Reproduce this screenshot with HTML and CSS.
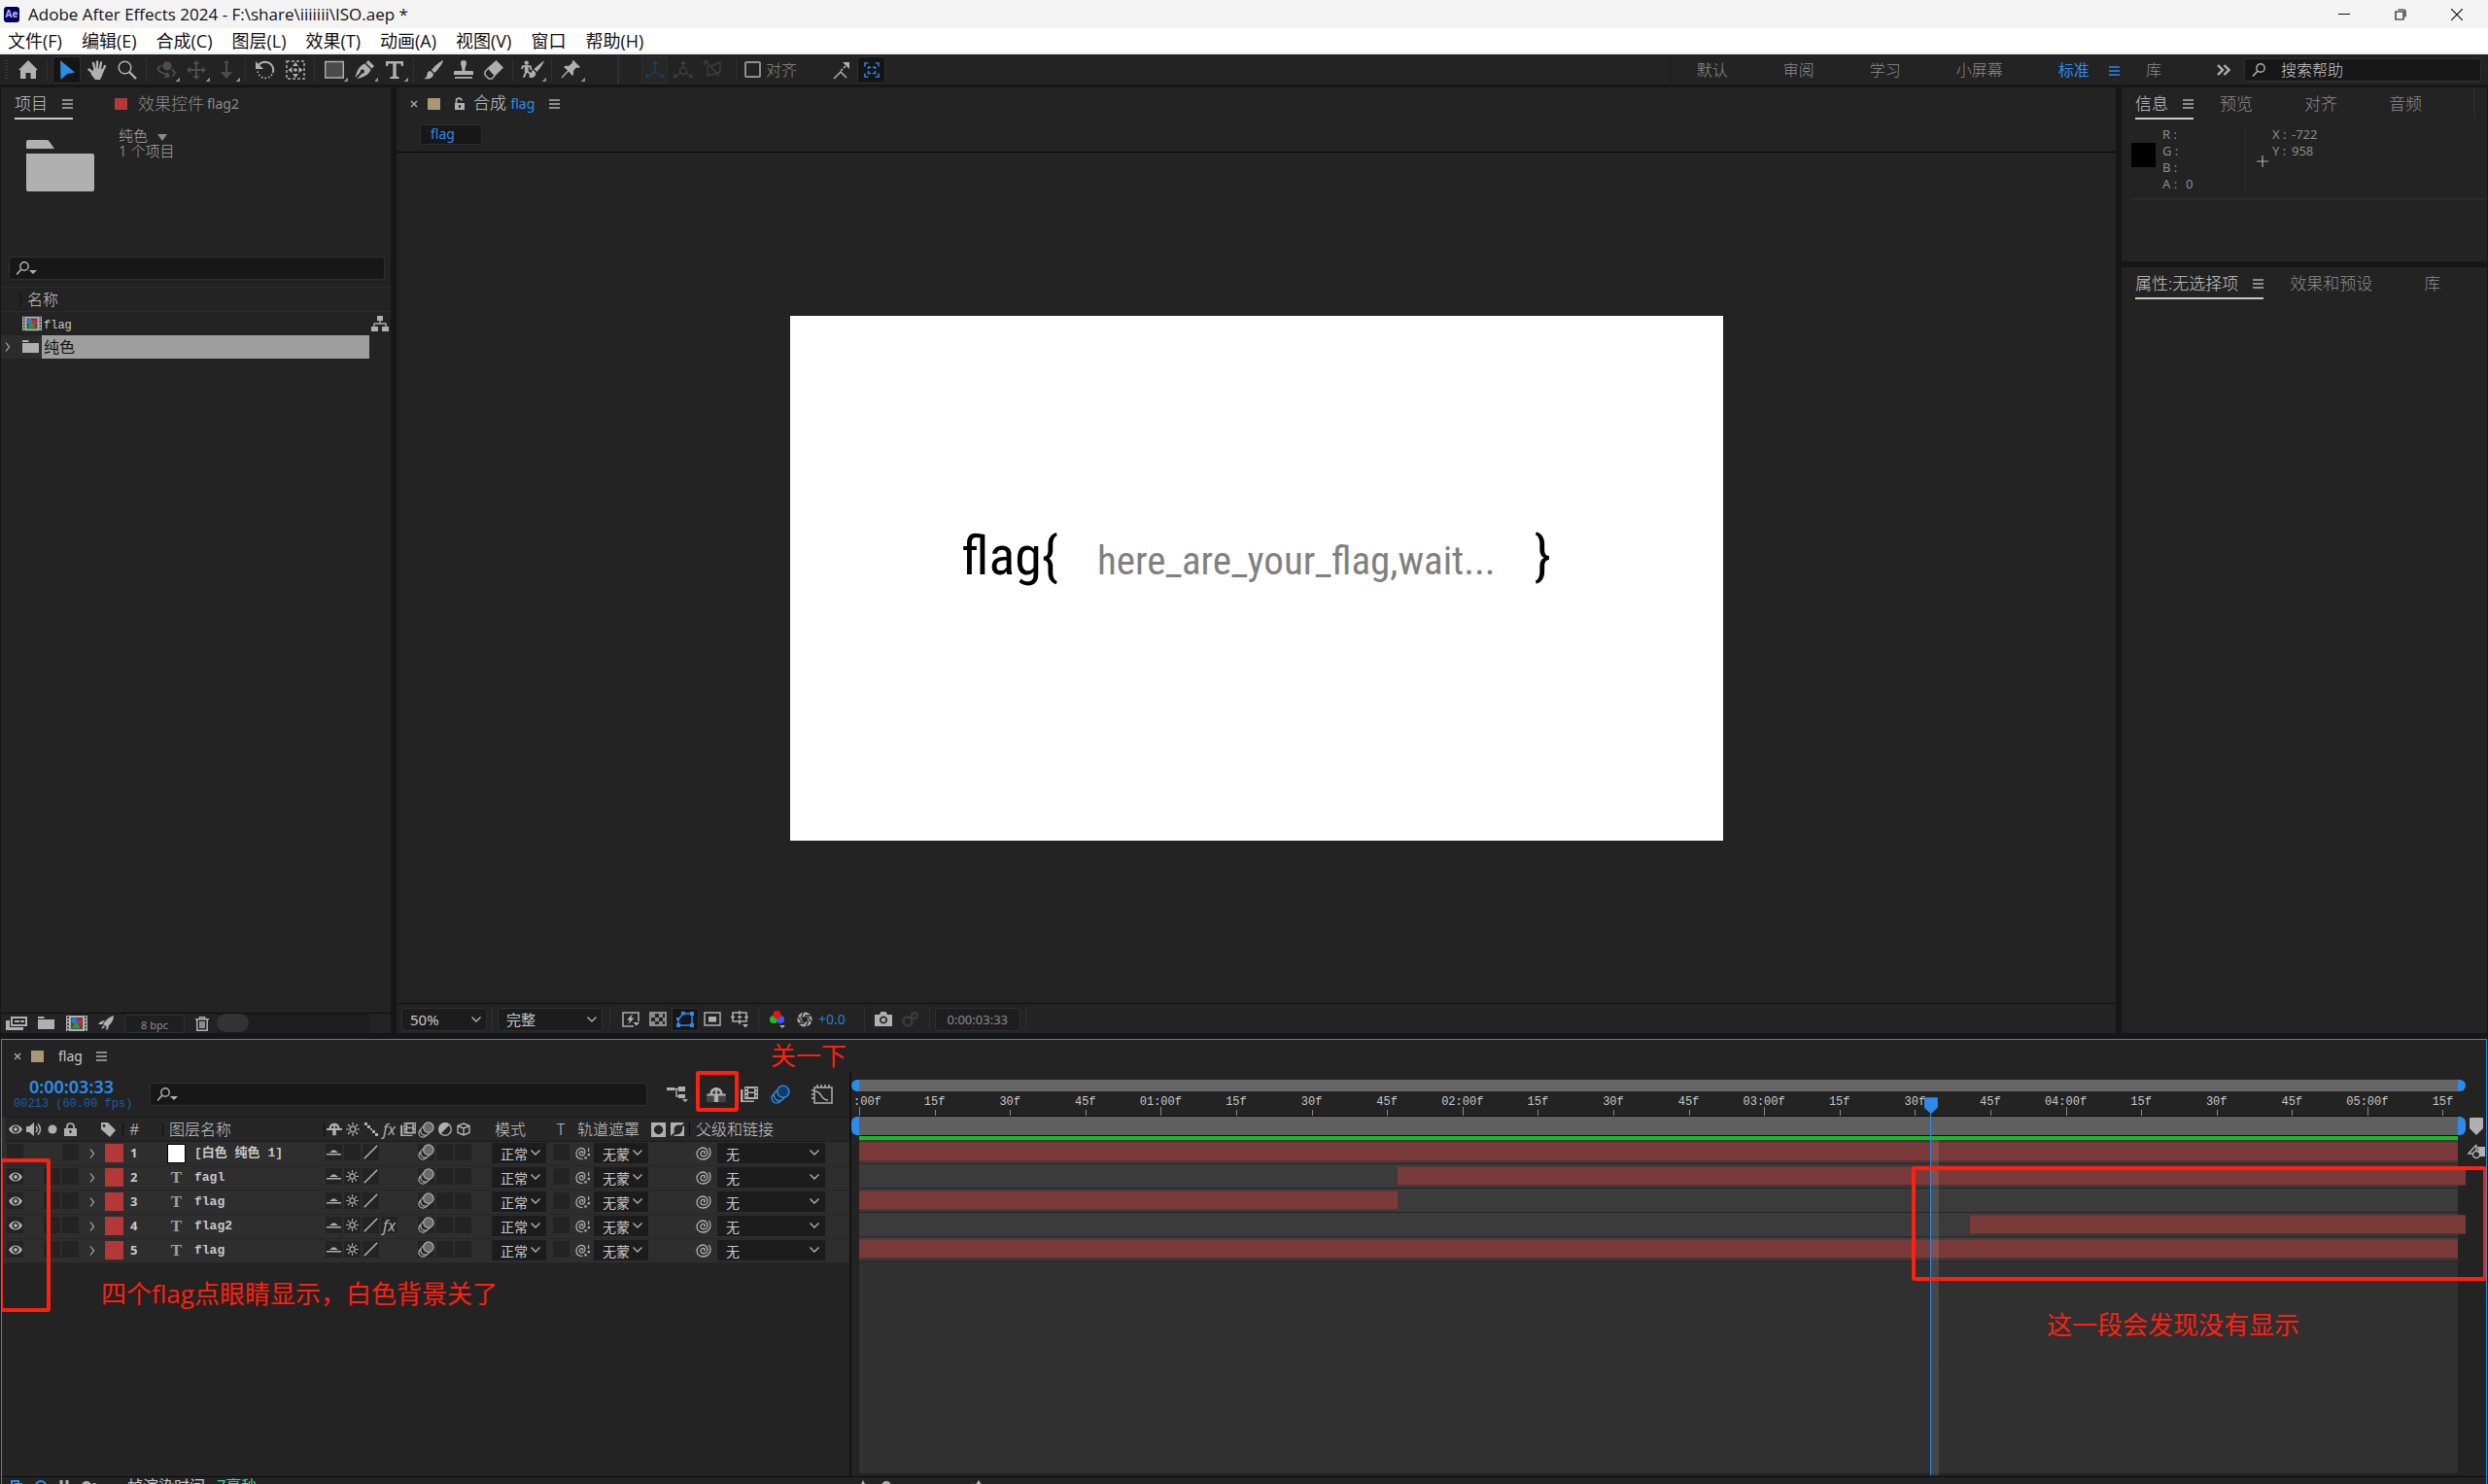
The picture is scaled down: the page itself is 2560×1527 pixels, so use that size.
FILE: index.html
```html
<!DOCTYPE html>
<html lang="zh-CN">
<head>
    <meta charset="UTF-8">
    <meta name="viewport" content="width=device-width, initial-scale=1.0">
    <title>Adobe After Effects 2024</title>
    <link rel="stylesheet" href="styles.css">
</head>
<body>
    <!-- Icon sprite -->
    <svg class="sprite" aria-hidden="true">
        <symbol id="i-home" viewBox="0 0 20 20"><path fill="currentColor" d="M10 0 20 10h-2v9h-5.500v-6h-5v6H2v-9H0z"/></symbol>
        <symbol id="i-select" viewBox="0 0 20 20"><path fill="currentColor" d="M3 0 18 12.500 10 14 3.500 20z"/></symbol>
        <symbol id="i-hand" viewBox="0 0 20 20"><path fill="none" stroke="currentColor" stroke-width="2.400" stroke-linecap="round" d="M6 3l2 8M10 1.500V11M14 2.500 12.500 11M18 6l-3 6M1.500 9.500 6 13"/><path fill="currentColor" d="M6 9h9l2 1-2 6-2 4H8l-4-5-1-4 3 1z"/></symbol>
        <symbol id="i-zoom" viewBox="0 0 20 20"><circle cx="7.500" cy="7.500" r="6.300" fill="none" stroke="currentColor" stroke-width="1.500"/><path stroke="currentColor" stroke-width="2.400" d="M12 12l7 7"/></symbol>
        <symbol id="i-orbit" viewBox="0 0 22 20"><circle cx="12" cy="5.500" r="5" fill="currentColor"/><path fill="none" stroke="currentColor" stroke-width="2" d="M6 5C2 6 0 9 4 12c3 2 7 2 9 5M17 9c4 2 5 6 1 8M9 18l5-1-2-4"/></symbol>
        <symbol id="i-move" viewBox="0 0 20 20"><path fill="currentColor" d="M10 0l3.500 4H11v5h5V6.500l4 3.500-4 3.500V11h-5v5h2.500L10 20l-3.500-4H9v-5H4v2.500L0 10l4-3.500V9h5V4H6.500z"/></symbol>
        <symbol id="i-dolly" viewBox="0 0 20 20"><path fill="currentColor" d="M10 0l3 3h-2v9h5l-6 7-6-7h5V3H7z"/></symbol>
        <symbol id="i-rotate" viewBox="0 0 20 20"><path fill="none" stroke="currentColor" stroke-width="2" d="M3 5c4-5 13-4 15 3 .4 2 .3 4-.5 5"/><path fill="none" stroke="currentColor" stroke-width="1.600" stroke-dasharray="1.600 2" d="M17 14.500C13 20.500 4 19.500 2 11.500"/><path fill="currentColor" d="M0 1v8h8z"/></symbol>
        <symbol id="i-anchor" viewBox="0 0 20 20"><path fill="none" stroke="currentColor" stroke-width="1.500" stroke-dasharray="3 2" d="M1 1h18v18H1z"/><path fill="currentColor" d="M10 2l3 4H7zM10 18l-3-4h6zM2.500 10l4-3v6zM17.500 10l-4-3v6z"/><circle cx="10" cy="10" r="1.800" fill="currentColor"/></symbol>
        <symbol id="i-rect" viewBox="0 0 20 20"><path fill="#4a4a4a" stroke="currentColor" stroke-width="1.400" d="M.7 1.500h18.600v16.500H.7z"/></symbol>
        <symbol id="i-pen" viewBox="0 0 20 20"><path fill="currentColor" d="M14 0l6 6-2.500 2.500-6-6zM10.500 3.500l6 6C15 15 9 17 2 19.500l5.500-6a2 2 0 1 0-1.500-1.500L.5 18C2 11 5 5 10.500 3.500z"/></symbol>
        <symbol id="i-type" viewBox="0 0 20 20"><path fill="currentColor" d="M1 1h18v5h-2l-.6-2.500H11.700V16.500l2.800.7V19h-9v-1.800l2.800-.7V3.500H3.600L3 6H1z"/></symbol>
        <symbol id="i-brush" viewBox="0 0 20 20"><path fill="currentColor" d="M20 0c0 2-5 10-9 13l-3-3C11 6 17 1 20 0zM7 11l3 3c0 4-4 6-10 5 3-1 3-2 3.500-5 .3-2 1.700-3 3.500-3z"/></symbol>
        <symbol id="i-stamp" viewBox="0 0 20 20"><path fill="currentColor" d="M10 0a3 3 0 0 1 3 3c0 2-1.500 3-1.500 8H19c1 0 1 1 1 1v3H0v-3s0-1 1-1h7.500c0-5-1.500-6-1.500-8a3 3 0 0 1 3-3zM1 17h18v1.700H1z"/></symbol>
        <symbol id="i-eraser" viewBox="0 0 20 20"><path fill="currentColor" d="M12.500 0 20 7.500 11 16.500 3.500 8z"/><path fill="none" stroke="currentColor" stroke-width="1.500" d="M4 8.500 1 12v3l4 4h3l3-3"/></symbol>
        <symbol id="i-roto" viewBox="0 0 25 20"><circle cx="6" cy="2.300" r="2.300" fill="currentColor"/><path fill="none" stroke="currentColor" stroke-width="2" d="M6 5v6l-3 7M6 11l4 3v4M1 9l1-3h8l1 4"/><path fill="currentColor" d="M4 5h4v7H4zM25 0c-1 3-5 9-8 12l-3-3c3-3 9-8 11-9zM13 10l3 3c0 4-3 6-7 5 2-2 1-6 4-8z"/></symbol>
        <symbol id="i-pin" viewBox="0 0 20 20"><path fill="currentColor" d="M12 0l7 7-2 1-2-.5-3 3.500c.5 2 0 4-1 5L7 11.500.5 18.500l-1-1L6 10.500 2 7c1-1 3-1.500 5-1l4-3.500L10.500 1z"/></symbol>
        <symbol id="i-axis" viewBox="0 0 20 20"><path fill="none" stroke="currentColor" stroke-width="1.400" d="M10 3v9M10 12l-8 5M10 12l8 5"/><path fill="currentColor" d="M10 0l3 4H7zM0 18l1-5 3 5zM20 18l-1-5-3 5z"/></symbol>
        <symbol id="i-world" viewBox="0 0 20 20"><path fill="none" stroke="currentColor" stroke-width="1.400" d="M10 3v5M7 13l-5 4M13 13l5 4"/><circle cx="10" cy="11" r="3.500" fill="none" stroke="currentColor" stroke-width="1.400"/><path fill="currentColor" d="M10 0l3 4H7zM0 18l1-5 3 5zM20 18l-1-5-3 5z"/></symbol>
        <symbol id="i-view" viewBox="0 0 20 20"><path fill="none" stroke="currentColor" stroke-width="1.400" d="M2 1l14 15M4 6v10l13-4V2L8 6M1 5V1h4"/></symbol>
        <symbol id="i-snap" viewBox="0 0 20 20"><path fill="none" stroke="currentColor" stroke-width="1.500" d="M2 19l7-7 6 6M9 11l2-2M12 8l2-2"/><path fill="currentColor" d="M11 2h7v7z"/></symbol>
        <symbol id="i-snap2" viewBox="0 0 18 18"><path fill="none" stroke="currentColor" stroke-width="1.600" d="M1 5V1h4M13 1h4v4M17 13v4h-4M5 17H1v-4M5 8V6h3M10 6h3v2M13 10v3h-3M8 13H5v-3"/></symbol>
        <symbol id="i-menu" viewBox="0 0 11 10"><path stroke="currentColor" stroke-width="1.400" d="M0 1h11M0 5h11M0 9h11"/></symbol>
        <symbol id="i-more" viewBox="0 0 14 12"><path fill="none" stroke="currentColor" stroke-width="2.400" d="M1 1l5 5-5 5M7.500 1l5 5-5 5"/></symbol>
        <symbol id="i-close" viewBox="0 0 8 8"><path stroke="currentColor" stroke-width="1.300" d="M1 1l6 6M7 1 1 7"/></symbol>
        <symbol id="i-search" viewBox="0 0 20 14"><circle cx="8" cy="5" r="4.200" fill="none" stroke="currentColor" stroke-width="1.400"/><path stroke="currentColor" stroke-width="1.600" d="M5 8l-5 5.500"/></symbol>
        <symbol id="i-searchdrop" viewBox="0 0 22 14"><circle cx="8" cy="5" r="4.200" fill="none" stroke="currentColor" stroke-width="1.400"/><path stroke="currentColor" stroke-width="1.600" d="M5 8l-5 5.500"/><path fill="currentColor" d="M13 9h8l-4 4z"/></symbol>
        <symbol id="i-lockopen" viewBox="0 0 12 14"><path fill="none" stroke="currentColor" stroke-width="1.600" d="M2.500 6V3.500C2.500.3 8 .3 8 3.500"/><path fill="currentColor" fill-rule="evenodd" d="M1 6h10v7H1zM5 8v3h2V8z"/></symbol>
        <symbol id="i-folder" viewBox="0 0 70 53"><path fill="currentColor" d="M0 9V2q0-2 2-2h19q2 0 3 2l5 7zM0 14h68q2 0 2 2v35q0 2-2 2H2q-2 0-2-2z"/></symbol>
        <symbol id="i-folders" viewBox="0 0 18 14"><path fill="currentColor" d="M0 2V0h6l1 2zM0 3h17v10H0z"/></symbol>
        <symbol id="i-comp" viewBox="0 0 22 16"><path fill="#b0b0b0" d="M0 0h22v16H0z"/><path stroke="#232323" stroke-width="1.500" stroke-dasharray="2 1.500" d="M2 1v15M20 1v15"/><path fill="#4a4a4a" d="M5 2h12v12H5z"/><circle cx="8.500" cy="5.500" r="3" fill="#1f7be0"/><path fill="#d8252b" d="M11 4h5v6h-5z"/><path fill="#1ea03c" d="M10 6l5 7H6z"/></symbol>
        <symbol id="i-tree" viewBox="0 0 18 16"><path fill="currentColor" d="M6 0h6v5H6zM0 11h7v5H0zM11 11h7v5h-7z"/><path fill="none" stroke="currentColor" stroke-width="1.300" d="M9 5v3M3 11V8h12v3"/></symbol>
        <symbol id="i-footage" viewBox="0 0 22 14"><path fill="none" stroke="currentColor" stroke-width="2" d="M6 1h15v8H6z"/><path fill="currentColor" d="M9 4h5v2H9zM15 4h4v2h-4zM0 4h4v7h14v3H0z"/></symbol>
        <symbol id="i-rocket" viewBox="0 0 16 16"><path fill="currentColor" d="M16 0c0 5-3 9-7 12l-4-3C8 4 12 1 16 0zM0 9c2-3 4-4 7-4L4 9zM8 15c2-1 3-2 3-5l-3 3zM5 10l2 2-4 2z"/></symbol>
        <symbol id="i-trash" viewBox="0 0 14 15"><path fill="none" stroke="currentColor" stroke-width="1.500" d="M0 2.800h14M4.500 2.500V.8h5v1.700M1.800 3v11.200h10.400V3M5 5v7M7 5v7M9 5v7"/></symbol>
        <symbol id="i-chev" viewBox="0 0 10 6"><path fill="none" stroke="currentColor" stroke-width="1.400" d="M.5.5 5 5 9.500.5"/></symbol>
        <symbol id="i-chevr" viewBox="0 0 6 10"><path fill="none" stroke="currentColor" stroke-width="1.200" d="M1 .5 4.500 5 1 9.500"/></symbol>
        <symbol id="i-fast" viewBox="0 0 18 16"><path fill="none" stroke="currentColor" stroke-width="1.500" d="M17 10V1H1v14h11"/><path fill="currentColor" d="M11 2 5 8.500h3L6.500 13l6-6.500H9.500zM11.500 11h6.500l-3.200 3.500z"/></symbol>
        <symbol id="i-grid" viewBox="0 0 18 15"><path fill="none" stroke="currentColor" stroke-width="1.500" d="M1 1h16v13H1z"/><path fill="#8a8a8a" d="M2 2h4v4H2zM10 2h4v4h-4zM6 6h4v4H6zM14 6h2v4h-2zM2 10h4v3H2zM10 10h4v3h-4z"/></symbol>
        <symbol id="i-mask" viewBox="0 0 18 16"><path fill="none" stroke="currentColor" stroke-width="1.500" d="M2 14V8l5-6h9v12z"/><path fill="currentColor" d="M0 12h4v4H0zM0 6h3v3H0zM5 0h4v3H5zM14 0h4v4h-4zM14 12h4v4h-4z"/></symbol>
        <symbol id="i-roi" viewBox="0 0 18 15"><path fill="none" stroke="currentColor" stroke-width="1.500" d="M1 1h16v13H1z"/><path fill="currentColor" d="M5 5h8v5.500H5z"/></symbol>
        <symbol id="i-guides" viewBox="0 0 18 18"><path fill="none" stroke="currentColor" stroke-width="1.500" d="M2 2h14v9H2zM9 0v4M9 9v5M0 6.500h4M14 6.500h4M7 6.500h4M9 5v3"/><path fill="currentColor" d="M12 14h6l-3 3.500z"/></symbol>
        <symbol id="i-rgb" viewBox="0 0 16 18"><circle cx="4" cy="9" r="4" fill="#1dc01d"/><circle cx="11" cy="9" r="4" fill="#3a5bff"/><circle cx="7.500" cy="4" r="4" fill="#f01010"/><path fill="#b0b0b0" d="M10 15h6l-3 3z"/></symbol>
        <symbol id="i-shutter" viewBox="0 0 16 16"><circle cx="8" cy="8" r="5.300" fill="none" stroke="currentColor" stroke-width="4.600"/><path stroke="#232323" stroke-width="1.300" d="M7 0 4 7M15 4 8 4M15 11l-4-6M9 16l3-7M1 12h7M1 5l4 6"/></symbol>
        <symbol id="i-camera" viewBox="0 0 18 15"><path fill="currentColor" fill-rule="evenodd" d="M0 3h5l1.500-3h5L13 3h5v12H0zM9 4.500a4 4 0 1 0 .1 0z"/><circle cx="9" cy="8.500" r="2.300" fill="currentColor"/></symbol>
        <symbol id="i-ghost" viewBox="0 0 18 16"><circle cx="6" cy="10" r="4.500" fill="none" stroke="currentColor" stroke-width="2.500"/><circle cx="13" cy="4" r="3" fill="none" stroke="currentColor" stroke-width="2"/></symbol>
        <symbol id="i-flow" viewBox="0 0 22 16"><path fill="currentColor" d="M0 1h8v3H0zM12 0h7v5h-7zM12 8h7v4h-7zM16 13h6l-3 3z"/><path fill="none" stroke="currentColor" stroke-width="1.400" d="M7 2.500h6M10 2.500V10h3"/></symbol>
        <symbol id="i-shy" viewBox="0 0 18 14"><path fill="currentColor" fill-rule="evenodd" d="M3 6c0-8 12-8 12 0h3v2h-7v6H7V8H0V6zM5.500 6H8V3C6 3 5.500 4.500 5.500 6zM10 6h2.500c0-1.500-.5-3-2.500-3z"/></symbol>
        <symbol id="i-shyoff" viewBox="0 0 15 7"><path fill="currentColor" d="M0 5h15v1.600H0zM3 4c1-1.500 2.500-1 3-2.500h3C9.500 3 11 2.500 12 4z"/></symbol>
        <symbol id="i-film" viewBox="0 0 18 16"><path fill="currentColor" fill-rule="evenodd" d="M4 0h14v13H4zM8 2v3.500h6V2zM8 7v4h6V7zM5 1.500v1.500h1.500V1.500zM5 5v1.500h1.500V5zM5 9v1.500h1.500V9zM15.500 1.500v1.500H17V1.500zM15.500 5v1.500H17V5zM15.500 9v1.500H17V9zM0 3h2.500v11.500H14V16H0z"/></symbol>
        <symbol id="i-blur" viewBox="0 0 18 18"><circle cx="5.500" cy="12.500" r="4.500" fill="#232323" stroke="currentColor" stroke-width="1.300"/><circle cx="8" cy="10" r="5" fill="#232323" stroke="currentColor" stroke-width="1.300"/><circle cx="11.500" cy="6.500" r="5.500" fill="var(--blur-fill, #6a6a6a)" stroke="currentColor" stroke-width="1.300"/></symbol>
        <symbol id="i-graph" viewBox="0 0 22 20"><path fill="none" stroke="currentColor" stroke-width="1.500" d="M3 3h18v16H3zM0 6h3M0 10h3M0 14h3M6 0v3M10 0v3M14 0v3M18 0v3M4 7c7 0 5 9 13 9"/></symbol>
        <symbol id="i-eye" viewBox="0 0 14 10"><path fill="currentColor" fill-rule="evenodd" d="M0 5C3-1 11-1 14 5c-3 6-11 6-14 0zM7 1.500A3.500 3.500 0 1 0 7.100 1.500z"/><circle cx="7" cy="5" r="1.900" fill="currentColor"/></symbol>
        <symbol id="i-sound" viewBox="0 0 16 14"><path fill="currentColor" d="M0 4h3l5-4v14l-5-4H0z"/><path fill="none" stroke="currentColor" stroke-width="1.500" d="M10 4q2.500 3 0 6M12 1.500q5 5.500 0 11"/></symbol>
        <symbol id="i-dot" viewBox="0 0 10 10"><circle cx="5" cy="5" r="4.500" fill="currentColor"/></symbol>
        <symbol id="i-lock" viewBox="0 0 13 14"><path fill="none" stroke="currentColor" stroke-width="1.700" d="M3 7V4c0-4 7-4 7 0v3"/><path fill="currentColor" fill-rule="evenodd" d="M0 6h13v8H0zM5.500 8v3h2V8z"/></symbol>
        <symbol id="i-tag" viewBox="0 0 16 15"><path fill="currentColor" fill-rule="evenodd" d="M1 0h7l8 8-6 7-9-8zM4 2a1.500 1.500 0 1 0 .1 0z"/></symbol>
        <symbol id="i-sun" viewBox="0 0 14 14"><circle cx="7" cy="7" r="2.800" fill="none" stroke="currentColor" stroke-width="1.300"/><path stroke="currentColor" stroke-width="1.200" d="M7 0v3M7 11v3M0 7h3M11 7h3M2 2l2 2M10 10l2 2M12 2l-2 2M4 10l-2 2"/></symbol>
        <symbol id="i-qual" viewBox="0 0 14 14"><path fill="currentColor" d="M0 0h3v3H0zM3 3h3v3H3zM6 6h2v2H6zM8 8h3v3H8zM11 11h3v3h-3z"/></symbol>
        <symbol id="i-slash" viewBox="0 0 15 15"><path stroke="currentColor" stroke-width="1.600" d="M.8 14.200 14.200.8"/></symbol>
        <symbol id="i-half" viewBox="0 0 14 14"><circle cx="7" cy="7" r="6.300" fill="none" stroke="currentColor" stroke-width="1.300"/><path fill="currentColor" d="M2 12 12 2C8-1 2 0 .7 5c-.6 3 .3 6 1.300 7z"/></symbol>
        <symbol id="i-cube" viewBox="0 0 14 14"><path fill="none" stroke="currentColor" stroke-width="1.400" d="M7 1l6 2.500v7L7 13l-6-2.500v-7zM1 3.500 7 6l6-2.500M7 6v7"/></symbol>
        <symbol id="i-matte" viewBox="0 0 15 15"><path fill="currentColor" fill-rule="evenodd" d="M0 0h15v15H0zM7.500 2.800a4.700 4.700 0 1 0 .1 0z"/></symbol>
        <symbol id="i-matte2" viewBox="0 0 15 15"><path fill="currentColor" d="M0 0h14L11 3C7 1 2 4 4 10l-4 4zM14 3v11H3l1.500-1.500C10 13 13 9 12 5z"/></symbol>
        <symbol id="i-whip" viewBox="0 0 16 15"><path fill="none" stroke="currentColor" stroke-width="1.300" d="M8 8c1.500 0 2-2 .5-2.500C6 5 4.500 7 5 9c1 2.500 5 2.500 6.500 0C13 6 11 2 7.500 2 4 2 1 5 1 8c0 4 3 6 6.500 6 4 0 7.500-3 7.500-7 0-2-.5-3.500-1.500-5"/></symbol>
        <symbol id="i-whipm" viewBox="0 0 16 15"><path fill="none" stroke="currentColor" stroke-width="1.300" d="M7 8c1.500 0 2-2 .5-2.500C5.500 5 4 7 4.500 8.500c1 2.500 4.500 2.500 5.500 0C11.500 5.500 10 2 7 2 3.500 2 1 5 1 8c0 4 3 6 7 6M14.500 2v4"/><path fill="currentColor" d="M10 11.500h2.500V14H10zM13.500 8H16v2.500h-2.500z"/></symbol>
        <symbol id="i-marker" viewBox="0 0 14 18"><path fill="currentColor" d="M0 1q0-1 1-1h12q1 0 1 1v10l-7 7-7-7z"/></symbol>
        <symbol id="i-bin" viewBox="0 0 18 16"><path fill="currentColor" d="M10 3h8v10h-6z"/><path fill="none" stroke="currentColor" stroke-width="1.500" d="M9 1v6M9 1 1 10h5"/><circle cx="9" cy="11" r="3.500" fill="#232323" stroke="currentColor" stroke-width="1.500"/></symbol>
        <symbol id="i-plus" viewBox="0 0 12 12"><path stroke="currentColor" stroke-width="1.200" d="M6 0v12M0 6h12"/></symbol>
    </svg>

    <header class="titlebar">
        <span class="app-logo">Ae</span>
        <h1>Adobe After Effects 2024 - F:\share\iiiiiii\ISO.aep *</h1>
        <div class="window-buttons">
            <button type="button" aria-label="最小化"><svg width="12" height="12" viewBox="0 0 12 12"><path stroke="#111" d="M0 5.500h12"/></svg></button>
            <button type="button" aria-label="还原"><svg width="12" height="12" viewBox="0 0 12 12"><path fill="none" stroke="#111" stroke-width="1.200" d="M1 3h8v8H1zM3.500 1H9q2 0 2 2v5.500"/></svg></button>
            <button type="button" aria-label="关闭"><svg width="12" height="12" viewBox="0 0 12 12"><path stroke="#111" stroke-width="1.200" d="M0 0l12 12M12 0 0 12"/></svg></button>
        </div>
    </header>

    <nav class="menubar">
        <a href="#">文件(F)</a>
        <a href="#">编辑(E)</a>
        <a href="#">合成(C)</a>
        <a href="#">图层(L)</a>
        <a href="#">效果(T)</a>
        <a href="#">动画(A)</a>
        <a href="#">视图(V)</a>
        <a href="#">窗口</a>
        <a href="#">帮助(H)</a>
    </nav>

    <div class="toolbar">
        <div class="tools">
            <span class="grip"></span>
            <button type="button" class="tool" aria-label="主页"><svg><use href="#i-home"/></svg></button>
            <i class="sep"></i>
            <button type="button" class="tool active" aria-label="选取"><svg><use href="#i-select"/></svg></button>
            <button type="button" class="tool" aria-label="手形"><svg><use href="#i-hand"/></svg></button>
            <button type="button" class="tool" aria-label="缩放"><svg><use href="#i-zoom"/></svg></button>
            <i class="sep"></i>
            <button type="button" class="tool off more" aria-label="旋转相机"><svg><use href="#i-orbit"/></svg></button>
            <button type="button" class="tool off more" aria-label="平移相机"><svg><use href="#i-move"/></svg></button>
            <button type="button" class="tool off more" aria-label="推拉相机"><svg><use href="#i-dolly"/></svg></button>
            <i class="sep"></i>
            <button type="button" class="tool" aria-label="旋转"><svg><use href="#i-rotate"/></svg></button>
            <button type="button" class="tool" aria-label="锚点"><svg><use href="#i-anchor"/></svg></button>
            <i class="sep"></i>
            <button type="button" class="tool more" aria-label="矩形"><svg><use href="#i-rect"/></svg></button>
            <button type="button" class="tool more" aria-label="钢笔"><svg><use href="#i-pen"/></svg></button>
            <button type="button" class="tool more" aria-label="文字"><svg><use href="#i-type"/></svg></button>
            <i class="sep"></i>
            <button type="button" class="tool" aria-label="画笔"><svg><use href="#i-brush"/></svg></button>
            <button type="button" class="tool" aria-label="仿制图章"><svg><use href="#i-stamp"/></svg></button>
            <button type="button" class="tool" aria-label="橡皮擦"><svg><use href="#i-eraser"/></svg></button>
            <i class="sep"></i>
            <button type="button" class="tool more" aria-label="Roto 笔刷"><svg class="wide"><use href="#i-roto"/></svg></button>
            <i class="sep"></i>
            <button type="button" class="tool more" aria-label="人偶图钉"><svg><use href="#i-pin"/></svg></button>
        </div>
        <div class="tools snapping">
            <button type="button" class="tool axis-on" aria-label="本地轴"><svg><use href="#i-axis"/></svg></button>
            <button type="button" class="tool dim" aria-label="世界轴"><svg><use href="#i-world"/></svg></button>
            <button type="button" class="tool dim" aria-label="视图轴"><svg><use href="#i-view"/></svg></button>
            <i class="sep"></i>
            <label class="snap"><input type="checkbox">对齐</label>
            <button type="button" class="tool" aria-label="对齐边缘"><svg><use href="#i-snap"/></svg></button>
            <button type="button" class="tool active" aria-label="对齐要素"><svg class="small"><use href="#i-snap2"/></svg></button>
        </div>
        <nav class="workspaces">
            <a href="#">默认</a>
            <a href="#">审阅</a>
            <a href="#">学习</a>
            <a href="#">小屏幕</a>
            <a href="#" class="current">标准 <svg class="menu-icon"><use href="#i-menu"/></svg></a>
            <a href="#" class="lib">库</a>
            <button type="button" aria-label="更多"><svg class="more-icon"><use href="#i-more"/></svg></button>
        </nav>
        <label class="search help-search">
            <svg><use href="#i-search"/></svg>
            <input type="text" placeholder="搜索帮助" aria-label="搜索帮助">
        </label>
    </div>

    <main class="workspace">
        <section class="panel project">
            <div class="tabs">
                <a href="#" class="tab current">项目 <svg class="menu-icon"><use href="#i-menu"/></svg></a>
                <a href="#" class="tab effect-tab"><i class="swatch red"></i>效果控件 <span class="latin">flag2</span></a>
            </div>
            <div class="project-info">
                <svg class="big-folder"><use href="#i-folder"/></svg>
                <div>
                    <div>纯色 <i class="triangle"></i></div>
                    <div>1 个项目</div>
                </div>
            </div>
            <label class="search project-search">
                <svg><use href="#i-searchdrop"/></svg>
                <input type="text" aria-label="搜索项目">
            </label>
            <table class="items">
                <colgroup>
                    <col class="w-open"><col class="w-icon"><col><col class="w-tree">
                </colgroup>
                <thead>
                    <tr><th></th><th colspan="2">名称</th><th></th></tr>
                </thead>
                <tbody>
                    <tr><td></td><td><svg width="20" height="16"><use href="#i-comp"/></svg></td><td class="mono">flag</td><td><svg width="18" height="16"><use href="#i-tree"/></svg></td></tr>
                    <tr class="selected"><td><svg width="6" height="10"><use href="#i-chevr"/></svg></td><td><svg width="18" height="14"><use href="#i-folders"/></svg></td><td class="name">纯色</td><td></td></tr>
                </tbody>
            </table>
            <div class="project-footer">
                <button type="button" aria-label="解释素材"><svg width="22" height="14"><use href="#i-footage"/></svg></button>
                <button type="button" aria-label="新建文件夹"><svg width="18" height="14"><use href="#i-folders"/></svg></button>
                <button type="button" aria-label="新建合成"><svg width="22" height="16"><use href="#i-comp"/></svg></button>
                <button type="button" aria-label="项目设置"><svg width="16" height="16"><use href="#i-rocket"/></svg></button>
                <button type="button" class="bpc">8 bpc</button>
                <button type="button" aria-label="删除"><svg width="14" height="15"><use href="#i-trash"/></svg></button>
                <div class="hscroll"><span></span></div>
            </div>
        </section>

        <section class="panel composition">
            <div class="tabs">
                <button type="button" class="close" aria-label="关闭"><svg><use href="#i-close"/></svg></button>
                <i class="swatch tan"></i>
                <svg class="lock-icon"><use href="#i-lockopen"/></svg>
                <span class="comp-title">合成 <a href="#" class="latin">flag</a></span>
                <svg class="menu-icon"><use href="#i-menu"/></svg>
            </div>
            <div class="crumbs"><a href="#">flag</a></div>
            <div class="viewer">
                <div class="canvas">
                    <span class="brace">flag{</span>
                    <span class="hint">here_are_your_flag,wait...</span>
                    <span class="brace">}</span>
                </div>
            </div>
            <div class="viewer-footer">
                <span class="drop zoom-drop"><select aria-label="放大率"><option>50%</option></select><svg><use href="#i-chev"/></svg></span>
                <i class="sep"></i>
                <span class="drop res-drop"><select aria-label="分辨率"><option>完整</option></select><svg><use href="#i-chev"/></svg></span>
                <i class="sep"></i>
                <button type="button" aria-label="快速预览"><svg width="18" height="16"><use href="#i-fast"/></svg></button>
                <button type="button" aria-label="透明网格"><svg width="18" height="15"><use href="#i-grid"/></svg></button>
                <button type="button" class="active" aria-label="蒙版路径"><svg width="18" height="16"><use href="#i-mask"/></svg></button>
                <button type="button" aria-label="目标区域"><svg width="18" height="15"><use href="#i-roi"/></svg></button>
                <button type="button" aria-label="参考线"><svg width="18" height="18"><use href="#i-guides"/></svg></button>
                <i class="sep"></i>
                <button type="button" aria-label="通道"><svg width="16" height="18"><use href="#i-rgb"/></svg></button>
                <button type="button" aria-label="重置曝光"><svg width="16" height="16"><use href="#i-shutter"/></svg></button>
                <a href="#" class="exposure">+0.0</a>
                <i class="sep"></i>
                <button type="button" aria-label="快照"><svg width="18" height="15"><use href="#i-camera"/></svg></button>
                <button type="button" class="off" aria-label="显示快照"><svg width="18" height="16"><use href="#i-ghost"/></svg></button>
                <i class="sep"></i>
                <button type="button" class="time-box">0:00:03:33</button>
                <i class="sep"></i>
            </div>
        </section>

        <div class="side">
            <section class="panel info">
                <div class="tabs">
                    <a href="#" class="tab current">信息 <svg class="menu-icon"><use href="#i-menu"/></svg></a>
                    <a href="#" class="tab">预览</a>
                    <a href="#" class="tab">对齐</a>
                    <a href="#" class="tab">音频</a>
                    <button type="button" class="overflow" aria-label="更多"><svg class="more-icon"><use href="#i-more"/></svg></button>
                </div>
                <div class="readout">
                    <i class="color-chip"></i>
                    <dl class="rgba">
                        <dt>R :</dt><dd></dd>
                        <dt>G :</dt><dd></dd>
                        <dt>B :</dt><dd></dd>
                        <dt>A :</dt><dd>0</dd>
                    </dl>
                    <svg class="cross"><use href="#i-plus"/></svg>
                    <dl class="xy">
                        <dt>X :</dt><dd>-722</dd>
                        <dt>Y :</dt><dd>958</dd>
                    </dl>
                </div>
            </section>
            <section class="panel properties">
                <div class="tabs">
                    <a href="#" class="tab current">属性:无选择项 <svg class="menu-icon"><use href="#i-menu"/></svg></a>
                    <a href="#" class="tab">效果和预设</a>
                    <a href="#" class="tab">库</a>
                    <button type="button" class="overflow" aria-label="更多"><svg class="more-icon"><use href="#i-more"/></svg></button>
                </div>
            </section>
        </div>
    </main>

    <section class="timeline">
        <div class="tabs">
            <button type="button" class="close" aria-label="关闭"><svg><use href="#i-close"/></svg></button>
            <i class="swatch tan"></i>
            <a href="#" class="timeline-name latin">flag</a>
            <svg class="menu-icon"><use href="#i-menu"/></svg>
        </div>
        <div class="timeline-body">
            <div class="layers-side">
                <div class="layer-tools">
                    <div class="timecode">
                        <strong>0:00:03:33</strong>
                        <small>00213 (60.00 fps)</small>
                    </div>
                    <label class="search">
                        <svg><use href="#i-searchdrop"/></svg>
                        <input type="text" aria-label="搜索图层">
                    </label>
                    <div class="switches">
                        <button type="button" aria-label="合成微型流程图"><svg width="22" height="16"><use href="#i-flow"/></svg></button>
                        <button type="button" class="shy-toggle" aria-label="隐藏消隐图层"><svg width="20" height="15"><use href="#i-shy"/></svg></button>
                        <button type="button" aria-label="帧混合"><svg width="18" height="18"><use href="#i-film"/></svg></button>
                        <button type="button" class="blur-on" aria-label="运动模糊"><svg width="20" height="20"><use href="#i-blur"/></svg></button>
                        <button type="button" class="graph" aria-label="图表编辑器"><svg width="22" height="20"><use href="#i-graph"/></svg></button>
                    </div>
                </div>
                <table class="layers">
                    <colgroup>
                        <col class="w-box"><col class="w-box"><col class="w-box"><col class="w-box">
                        <col class="w-twirl"><col class="w-box"><col class="w-num"><col class="w-name">
                        <col class="w-box"><col class="w-box"><col class="w-box"><col class="w-box">
                        <col class="w-box"><col class="w-box"><col class="w-box"><col class="w-box">
                        <col class="w-mode"><col class="w-t"><col class="w-matte"><col>
                    </colgroup>
                    <thead>
                        <tr>
                            <th><svg width="14" height="10"><use href="#i-eye"/></svg></th>
                            <th><svg width="16" height="14"><use href="#i-sound"/></svg></th>
                            <th><svg width="10" height="10"><use href="#i-dot"/></svg></th>
                            <th><svg width="13" height="14"><use href="#i-lock"/></svg></th>
                            <th colspan="2" class="tag bar"><svg width="16" height="15"><use href="#i-tag"/></svg></th>
                            <th class="num bar">#</th>
                            <th class="lead bar">图层名称</th>
                            <th><svg width="16" height="14"><use href="#i-shy"/></svg></th>
                            <th><svg width="14" height="14"><use href="#i-sun"/></svg></th>
                            <th><svg width="14" height="14"><use href="#i-qual"/></svg></th>
                            <th class="fx">fx</th>
                            <th><svg width="16" height="14"><use href="#i-film"/></svg></th>
                            <th><svg width="17" height="17"><use href="#i-blur"/></svg></th>
                            <th><svg width="14" height="14"><use href="#i-half"/></svg></th>
                            <th><svg width="14" height="14"><use href="#i-cube"/></svg></th>
                            <th class="mode-head">模式</th>
                            <th>T</th>
                            <th class="matte-head bar">轨道遮罩<svg width="15" height="15"><use href="#i-matte"/></svg><svg width="15" height="15"><use href="#i-matte2"/></svg></th>
                            <th class="lead">父级和链接</th>
                        </tr>
                    </thead>
                    <tbody id="layer-rows"></tbody>
                </table>
            </div>

            <div class="time-side">
                <div class="range navigator"></div>
                <div class="ruler" id="ruler"></div>
                <div class="range work-area"></div>
                <div class="cache"></div>
                <div class="tracks" id="tracks"></div>
                <div class="playhead-lane">
                    <div class="playhead" id="playhead"><i></i></div>
                </div>
            </div>

            <div class="marker-side">
                <svg width="14" height="18"><use href="#i-marker"/></svg>
                <svg width="18" height="16"><use href="#i-bin"/></svg>
            </div>
        </div>
        <footer class="status">
            <div class="status-left">
                <svg class="blue" width="12" height="12" viewBox="0 0 12 12"><path fill="none" stroke="currentColor" stroke-width="2" d="M1 1h7v7H1zM4 4h7v7H4z"/></svg>
                <svg class="blue" width="12" height="12" viewBox="0 0 12 12"><circle cx="6" cy="6" r="5" fill="none" stroke="currentColor" stroke-width="2"/></svg>
                <svg width="10" height="14" viewBox="0 0 10 14"><path stroke="currentColor" stroke-width="3" d="M2 0v14M8 0v14"/></svg>
                <svg width="16" height="12" viewBox="0 0 16 12"><circle cx="5" cy="6" r="5" fill="currentColor"/><circle cx="13" cy="6" r="3" fill="currentColor"/></svg>
                <span>帧渲染时间 <b>7毫秒</b></span>
            </div>
            <div class="status-zoom">
                <svg width="8" height="8" viewBox="0 0 8 8"><path fill="currentColor" d="M4 0l4 8H0z"/></svg>
                <svg width="12" height="12" viewBox="0 0 12 12"><circle cx="6" cy="6" r="5" fill="currentColor"/></svg>
                <svg class="far" width="14" height="8" viewBox="0 0 14 8"><path fill="currentColor" d="M9 0l5 8H0l3-5 2 3z"/></svg>
            </div>
        </footer>

        <!-- Red notes drawn over the panel -->
        <div class="note-box note-eyes"></div>
        <div class="note-box note-shy"></div>
        <div class="note-box note-gap"></div>
        <p class="note note-shy-text">关一下</p>
        <p class="note note-eyes-text">四个flag点眼睛显示，白色背景关了</p>
        <p class="note note-gap-text">这一段会发现没有显示</p>
    </section>

    <script src="timeline.js"></script>
</body>
</html>
```
FILE: styles.css
```css
:root {
    --panel: #232323;
    --gap: #161616;
    --text: #8c8c8c;
    --bright: #c8c8c8;
    --icon: #b0b0b0;
    --blue: #2d8ceb;
    --note: #ff2010;
}

* {
    box-sizing: border-box;
}

body {
    margin: 0;
    height: 100vh;
    display: flex;
    flex-direction: column;
    overflow: hidden;
    background: var(--gap);
    color: var(--text);
    font: 300 17px/20px "Noto Sans", "Noto Sans CJK SC", sans-serif;
}

button {
    display: inline-flex;
    align-items: center;
    justify-content: center;
    padding: 0;
    border: 0;
    background: none;
    color: inherit;
    font: inherit;
}

a {
    color: inherit;
    text-decoration: none;
}

svg {
    flex: none;
    color: var(--icon);
}

input {
    min-width: 0;
    border: 0;
    outline: 0;
    background: none;
    color: var(--bright);
    font: inherit;
}

input::placeholder {
    color: var(--bright);
    opacity: 1;
}

.sprite {
    position: absolute;
    width: 0;
    height: 0;
}

.latin {
    font-size: 14px;
    font-weight: 400;
}

/* Window chrome */
.titlebar {
    display: flex;
    align-items: center;
    flex: none;
    height: 29px;
    padding: 0 3px 0 4px;
    background: #f3f3f3;
    color: #111;
}

.titlebar h1 {
    flex: 1;
    margin: 0 0 0 9px;
    font: 400 17px/28px "Open Sans", sans-serif;
}

.app-logo {
    width: 16px;
    height: 16px;
    border-radius: 3px;
    background: #00005b;
    color: #b9b4ff;
    font: 700 10px/15px "Open Sans", sans-serif;
    text-align: center;
}

.window-buttons {
    display: flex;
}

.window-buttons button {
    width: 58px;
    height: 28px;
}

.menubar {
    display: flex;
    flex: none;
    gap: 20px;
    height: 27px;
    padding-left: 8px;
    border-bottom: 2px solid #f0f0f0;
    background: #fff;
    color: #111;
    font: 400 18px/26px "Open Sans", "Noto Sans CJK SC", sans-serif;
}

/* Toolbar */
.toolbar {
    display: flex;
    align-items: center;
    flex: none;
    height: 31px;
    padding-right: 7px;
    background: var(--panel);
}

.tools {
    display: flex;
    align-items: center;
    height: 31px;
}

.grip {
    width: 3px;
    height: 20px;
    margin: 0 5px;
    background: repeating-linear-gradient(#3c3c3c 0 1px, transparent 1px 3px);
}

.tool {
    position: relative;
    width: 31px;
    height: 28px;
}

.tool svg {
    width: 20px;
    height: 20px;
    overflow: visible;
}

.tool svg.wide {
    width: 24px;
}

.tool svg.small {
    width: 16px;
    height: 16px;
}

.tool.active {
    width: 29px;
    margin: 0 1px;
    border: 1px solid #303030;
    border-radius: 3px;
    background: #151515;
}

.tool.active svg {
    color: var(--blue);
}

.tool.off svg {
    color: #4d4d4d;
}

.tool.dim svg {
    color: #3f3f3f;
}

.tool.axis-on {
    width: 27px;
    border: 1px solid #2e2e2e;
    background: #272727;
}

.tool.axis-on svg {
    color: #1f3f60;
}

.tool.more::after {
    content: "";
    position: absolute;
    right: 1px;
    bottom: 2px;
    width: 4px;
    height: 4px;
    background: linear-gradient(135deg, transparent 50%, #8a8a8a 50%);
}

.sep {
    width: 1px;
    height: 24px;
    margin: 0 4px;
    background: #303030;
}

.snapping {
    margin-left: 32px;
    padding-left: 23px;
    border-left: 2px solid #303030;
}

.snapping .sep {
    margin: 0 8px;
}

.snap {
    display: flex;
    align-items: center;
    gap: 5px;
    margin-right: 30px;
    font-size: 16px;
}

.snap input {
    width: 17px;
    height: 17px;
    margin: 0;
    border: 2px solid #8f8f8f;
    border-radius: 2px;
    appearance: none;
}

.workspaces {
    display: flex;
    align-items: center;
    gap: 57px;
    height: 29px;
    margin-left: auto;
    padding: 0 14px 0 28px;
    border-left: 1px solid #1a1a1a;
    font-size: 16px;
}

.workspaces .current,
.workspaces .current svg {
    color: var(--blue);
}

.workspaces .current {
    font-weight: 400;
}

.workspaces .current svg {
    margin-left: 16px;
}

.workspaces .lib {
    margin-left: -30px;
}

.menu-icon {
    width: 11px;
    height: 10px;
}

.more-icon {
    width: 14px;
    height: 12px;
}

.search {
    display: flex;
    align-items: center;
    height: 24px;
    border: 1px solid #303030;
    border-radius: 3px;
    background: #171717;
    font-size: 16px;
}

.search svg {
    width: 22px;
    height: 14px;
    margin-left: 7px;
}

.search input {
    flex: 1;
}

.help-search {
    width: 244px;
}

.help-search svg {
    margin-right: 6px;
}

/* Panels */
.workspace {
    display: grid;
    grid-template-columns: 401px minmax(0, 1fr) 376px;
    gap: 6px;
    flex: 974 1 0;
    min-height: 0;
    margin: 3px 1px 0;
}

.panel {
    display: flex;
    flex-direction: column;
    min-width: 0;
    min-height: 0;
    background: var(--panel);
}

.tabs {
    display: flex;
    align-items: center;
    flex: none;
    height: 33px;
    padding-left: 14px;
    white-space: nowrap;
    overflow: hidden;
}

.tab {
    display: flex;
    align-items: center;
    height: 33px;
    padding-top: 2px;
    margin-right: 53px;
    border-bottom: 2px solid transparent;
}

.tab.current {
    margin-right: 27px;
    border-color: var(--bright);
    color: var(--bright);
}

.tab .menu-icon {
    margin-left: 15px;
}

.tab .latin {
    margin-left: 3px;
}

.swatch {
    width: 13px;
    height: 12px;
}

.swatch.red {
    margin: 0 11px 0 16px;
    background: #b43838;
}

.swatch.tan {
    background: #a99777;
}

.close svg {
    width: 8px;
    height: 8px;
}

.overflow {
    align-self: stretch;
    margin-left: auto;
    padding: 0 4px 0 31px;
    border-left: 1px solid #303030;
    background: var(--panel);
}

/* Project panel */
.project-info {
    display: flex;
    gap: 25px;
    height: 141px;
    padding: 8px 0 0 26px;
    font-size: 15px;
    line-height: 16px;
    color: #a8a8a8;
}

.big-folder {
    width: 70px;
    height: 53px;
    margin-top: 13px;
}

.triangle {
    display: inline-block;
    margin-left: 6px;
    border: 5px solid transparent;
    border-top: 7px solid var(--text);
    border-bottom: 0;
}

.project-search {
    flex: none;
    margin: 0 6px 7px 8px;
}

.items {
    width: 100%;
    border-collapse: collapse;
    table-layout: fixed;
    font-size: 16px;
    color: var(--bright);
}

.w-open { width: 20px; }
.w-icon { width: 22px; }
.w-tree { width: 22px; }

.items th {
    height: 25px;
    padding: 0 0 0 7px;
    border-top: 1px solid #2a2a2a;
    border-bottom: 1px solid #2a2a2a;
    font-weight: 300;
    text-align: left;
}

.items th:nth-child(2) {
    background: linear-gradient(#111, #111) no-repeat 0 60% / 1px 14px;
}

.items td {
    height: 24px;
    padding: 0 0 0 2px;
    line-height: 20px;
}

.items td svg {
    display: block;
}

.items td:first-child {
    padding-left: 4px;
}

.items .selected .name {
    background: #9e9e9e;
    color: #111;
    font-weight: 400;
}

.items .selected td:nth-child(-n+2) {
    background: #2c2c2c;
}

.items .mono {
    padding-top: 4px;
    font: 12px/20px "Liberation Mono", monospace;
}

.project-footer {
    display: flex;
    align-items: center;
    height: 21px;
    margin-top: auto;
    padding-left: 5px;
    gap: 11px;
    border-top: 1px solid #0c0c0c;
}

.bpc {
    width: 62px;
    height: 19px;
    padding-top: 3px;
    border: 1px solid #303030;
    border-radius: 3px;
    background: #1f1f1f;
    font-size: 11px;
    font-weight: 400;
}

.hscroll {
    width: 158px;
    height: 20px;
    margin-left: -3px;
    background: #1e1e1e;
}

.hscroll span {
    display: block;
    width: 33px;
    height: 19px;
    border-radius: 10px;
    background: #333;
}

/* Composition panel */
.composition .tabs .swatch {
    margin: 0 14px 0 10px;
}

.lock-icon {
    width: 12px;
    height: 14px;
    margin-right: 8px;
}

.comp-title {
    margin-right: 15px;
    color: #d0d0d0;
}

.comp-title a,
.crumbs a {
    color: var(--blue);
}

.crumbs {
    height: 34px;
    padding: 5px 0 0 24px;
    border-bottom: 1px solid #060606;
}

.crumbs a {
    display: block;
    width: 64px;
    height: 21px;
    padding-left: 10px;
    border: 1px solid #2c2c2c;
    border-radius: 2px;
    background: #171717;
    font-size: 14px;
    font-weight: 400;
    line-height: 18px;
}

.viewer {
    display: grid;
    place-items: center;
    flex: 1;
    min-height: 0;
}

.canvas {
    display: flex;
    align-items: baseline;
    justify-content: center;
    gap: 40px;
    width: 960px;
    max-width: 100%;
    aspect-ratio: 16 / 9;
    padding-top: 207px;
    background: #fff;
    color: #000;
    font: 400 56px/80px "Roboto Condensed", Roboto, sans-serif;
    white-space: nowrap;
}

.hint {
    color: #808080;
    font-size: 41px;
}

.viewer-footer {
    display: flex;
    align-items: center;
    height: 31px;
    padding: 1px 0 0 5px;
    border-top: 1px solid #111;
    font-size: 15px;
    font-weight: 400;
}

.viewer-footer button {
    width: 28px;
    height: 24px;
}

.viewer-footer button.active {
    border: 1px solid #2e2e2e;
    background: #161616;
}

.viewer-footer button.active svg {
    color: var(--blue);
}

.viewer-footer button.off svg {
    color: #3c3c3c;
}

.viewer-footer .sep {
    margin: 0 5px;
}

.viewer-footer .res-drop + .sep {
    margin: 0 7px;
}

.viewer-footer .exposure {
    margin-right: 14px;
    color: #2b7dd0;
    font-size: 14px;
}

.viewer-footer .time-box {
    width: 88px;
    border: 1px solid #303030;
    border-radius: 3px;
    background: #1e1e1e;
    font-size: 13px;
}

.drop {
    position: relative;
    display: inline-block;
}

.drop select {
    width: 100%;
    height: 100%;
    padding: 0 0 0 8px;
    border: 1px solid transparent;
    background: #1c1c1c;
    color: var(--bright);
    font: inherit;
    appearance: none;
}

.drop svg {
    position: absolute;
    top: 7px;
    right: 6px;
    width: 10px;
    height: 6px;
}

.viewer-footer .drop {
    height: 24px;
}

.viewer-footer .drop select {
    border-color: #303030;
    border-radius: 3px;
}

.viewer-footer .drop svg {
    top: 9px;
}

.zoom-drop {
    width: 88px;
}

.res-drop {
    width: 108px;
}

/* Info and properties */
.side {
    display: flex;
    flex-direction: column;
    gap: 6px;
    min-width: 0;
}

.info {
    flex: none;
    height: 179px;
}

.properties {
    flex: 1;
}

.readout {
    display: flex;
    height: 83px;
    margin-left: 9px;
    padding: 7px 0;
    border-bottom: 2px solid #2b2b2b;
    font-size: 13px;
    font-weight: 400;
    line-height: 17px;
}

.readout dl {
    display: grid;
    grid-template-columns: 24px 1fr;
    grid-auto-rows: 17px;
    align-content: start;
    margin: 0;
}

.readout dd {
    margin: 0;
}

.color-chip {
    width: 25px;
    height: 25px;
    margin: 17px 7px 0 1px;
    background: #000;
}

.rgba {
    width: 86px;
    border-right: 1px solid #2e2e2e;
}

.readout .xy {
    grid-template-columns: 20px 1fr;
}

.cross {
    width: 12px;
    height: 12px;
    margin: 30px 4px 0 11px;
}

/* Timeline */
.timeline {
    position: relative;
    display: flex;
    flex-direction: column;
    flex: 457 1 0;
    min-height: 0;
    margin: 6px 1px 0;
    border: 1px solid var(--blue);
    border-bottom: 0;
    background: var(--panel);
    overflow: hidden;
}

.timeline > .tabs {
    padding-left: 12px;
}

.timeline .tabs .swatch {
    margin: 0 15px 0 10px;
}

.timeline-name {
    margin-right: 14px;
    color: var(--bright);
}

.timeline-body {
    display: grid;
    grid-template-columns: 872px minmax(0, 1fr) 21px;
    flex: 1;
    min-height: 0;
}

.layers-side {
    min-width: 0;
}

.layer-tools {
    display: flex;
    align-items: center;
    height: 46px;
}

.timecode {
    width: 152px;
    padding-left: 12px;
}

.timecode strong {
    display: block;
    padding-left: 16px;
    color: var(--blue);
    font-weight: 600;
    font-size: 18px;
    line-height: 20px;
}

.timecode small {
    display: block;
    color: #1b5ea6;
    font: 12px/16px "Liberation Mono", monospace;
}

.layer-tools .search {
    width: 512px;
}

.switches {
    display: flex;
    align-items: center;
    padding-left: 15px;
}

.switches button {
    width: 32px;
    height: 24px;
}

.switches .shy-toggle {
    width: 48px;
    margin-right: -6px;
}

.switches .shy-toggle svg {
    background: linear-gradient(#444, #444) no-repeat 0 100% / 100% 7px;
}

.switches .blur-on {
    --blur-fill: #123c68;
}

.switches .blur-on svg {
    color: var(--blue);
}

.switches .graph {
    margin-left: 11px;
}

.layers {
    width: 868px;
    margin-left: 4px;
    border-collapse: collapse;
    table-layout: fixed;
    box-shadow: -4px 0 #2e2e2e;
}

.w-box { width: 19px; }
.w-twirl { width: 26px; }
.w-num { width: 41px; }
.w-name { width: 166px; }
.w-mode { width: 80px; }
.w-t { width: 22px; }
.w-matte { width: 122px; }

.layers th {
    height: 25px;
    padding: 0;
    border-top: 1px solid #1b1b1b;
    border-bottom: 1px solid #1b1b1b;
    background-color: #262626;
    color: var(--bright);
    font-size: 16px;
    font-weight: 300;
    line-height: 20px;
    white-space: nowrap;
}

.layers th svg {
    display: block;
    margin: 0 auto;
}

.layers th.bar {
    background: #262626 linear-gradient(#0d0d0d, #0d0d0d) no-repeat 100% 50% / 1px 14px;
}

.layers th.tag svg {
    margin: 0 8px 0 auto;
}

.layers th.num,
.layers th.lead {
    padding-left: 6px;
    text-align: left;
}

.layers th.fx,
.layers .fx {
    color: var(--icon);
    font-style: italic;
    font-size: 16px;
    font-weight: 400;
}

.layers th.mode-head {
    padding-left: 23px;
    text-align: left;
}

.layers th.matte-head {
    padding-left: 6px;
    text-align: left;
}

.layers th.matte-head svg {
    display: inline-block;
    margin: 0 -7px 0 12px;
    vertical-align: -2px;
}

.layers td {
    height: 25px;
    padding: 1px 0 0;
    border-bottom: 1px solid #262626;
    background: #2e2e2e;
    color: var(--bright);
    font-size: 14px;
    line-height: 21px;
    text-align: center;
    vertical-align: top;
    white-space: nowrap;
}

.layers td > svg {
    display: block;
    margin: 6px auto 0;
}

.cell {
    display: grid;
    place-items: center;
    width: 17px;
    height: 17px;
    margin: 1px auto 0;
    background: #232323;
    line-height: 16px;
}

.label {
    display: block;
    width: 19px;
    height: 19px;
    margin-top: 1px;
    background: #b43838;
}

.layers td.num {
    padding-left: 7px;
    font-size: 13px;
    font-weight: 700;
    text-align: left;
}

.layer-name {
    display: flex;
    align-items: center;
    gap: 9px;
    height: 22px;
    padding-left: 4px;
    font: 700 13px/22px "Liberation Mono", "Noto Sans CJK SC", monospace;
}

.layer-name i {
    width: 19px;
    color: #a0a0a0;
    font: 700 17px/20px "Liberation Serif", serif;
    text-align: center;
}

.layer-name i.solid {
    height: 20px;
    border: 1px solid #000;
    background: #fff;
}

.layers .drop {
    height: 21px;
    font-weight: 400;
    vertical-align: top;
}

.layers td.mode {
    padding-left: 20px;
    text-align: left;
}

.mode .drop,
.matte .drop {
    width: 56px;
}

.parent .drop {
    width: 111px;
}

.pick {
    display: flex;
    gap: 4px;
    padding-left: 4px;
    text-align: left;
}

.pick svg {
    margin-top: 3px;
}

.parent .pick {
    gap: 6px;
    padding-left: 6px;
}

.pick .drop svg {
    margin-top: 0;
}

/* Time ruler and layer bars */
.time-side {
    position: relative;
    display: flex;
    flex-direction: column;
    min-width: 0;
    padding-top: 8px;
    border-left: 2px solid #121212;
}

.range {
    flex: none;
    border: solid var(--blue);
    border-width: 0 8px;
    border-radius: 6px;
    background: #666;
    background-clip: padding-box;
}

.navigator {
    height: 12px;
}

.ruler {
    display: flex;
    flex: none;
    height: 26px;
    margin: 0 8px;
    padding-top: 4px;
    border-bottom: 1px solid #0c0c0c;
    color: var(--bright);
    font: 12px/15px "Liberation Mono", monospace;
}

.tick {
    flex: none;
    background: linear-gradient(#8a8a8a, #8a8a8a) no-repeat 0 100% / 1px 6px;
}

.tick.major {
    background-size: 1px 9px;
}

.tick span {
    display: block;
    width: 60px;
    margin-left: -30px;
    text-align: center;
}

.tick:first-child span {
    margin-left: -6px;
    text-align: left;
}

.work-area {
    height: 19px;
    background-color: #5f5f5f;
}

.cache {
    flex: none;
    height: 5px;
    margin: 0 8px;
    border-top: 1px solid #0c0c0c;
    background: #14bf22;
}

.tracks {
    flex: 1;
    margin-bottom: 3px;
    padding: 0 8px;
    background: linear-gradient(#303030, #303030) no-repeat content-box;
}

.track {
    display: flex;
    height: 25px;
    margin: 0 -8px;
    padding: 0 8px;
    border-bottom: 1px solid #262626;
    background: linear-gradient(#3b3b3b, #3b3b3b) content-box #2e2e2e;
}

.bar-clip {
    flex: none;
    height: 20px;
    margin-top: 2px;
    border-top: 1px solid #5f3a3a;
    border-bottom: 1px solid #5a2f2f;
    background: #7b3a3a;
}

.bar-clip.open {
    flex: 1;
    margin-right: -8px;
}

.playhead-lane {
    position: absolute;
    inset: 26px 8px 1px;
    pointer-events: none;
}

.playhead {
    position: absolute;
    top: 0;
    bottom: 0;
    width: 9px;
    border-left: 1px solid var(--blue);
    background: linear-gradient(rgba(160, 160, 160, 0.2), rgba(160, 160, 160, 0.2)) no-repeat 0 44px;
}

.playhead i {
    display: block;
    width: 14px;
    height: 17px;
    margin-left: -7px;
    background: var(--blue);
    clip-path: polygon(0 0, 100% 0, 100% 60%, 50% 100%, 0 60%);
}

.marker-side {
    display: flex;
    flex-direction: column;
    align-items: center;
    gap: 9px;
    padding-top: 47px;
}

/* Status bar, partly below the window edge */
.status {
    display: flex;
    flex: none;
    height: 8px;
    overflow: hidden;
    border-top: 1px solid #0c0c0c;
}

.status-left,
.status-zoom {
    display: flex;
    align-items: flex-start;
}

.status-left {
    width: 882px;
    gap: 13px;
    padding-left: 9px;
}

.status svg {
    margin-top: 3px;
}

.status .blue {
    color: var(--blue);
}

.status span {
    margin-left: 18px;
    color: var(--bright);
    font-size: 16px;
    font-weight: 400;
    line-height: 18px;
}

.status b {
    margin-left: 8px;
    color: #4ecfa4;
    font-weight: 400;
}

.status-zoom {
    gap: 14px;
}

.status-zoom .far {
    margin-left: 66px;
}

/* Red notes */
.note-box {
    position: absolute;
    border: 4px solid var(--note);
    border-radius: 3px;
    pointer-events: none;
}

.note-eyes {
    top: 122px;
    left: -3px;
    width: 53px;
    height: 158px;
}

.note-shy {
    top: 32px;
    left: 714px;
    width: 44px;
    height: 42px;
}

.note-gap {
    top: 130px;
    right: -1px;
    width: 592px;
    height: 118px;
}

.note {
    position: absolute;
    margin: 0;
    color: var(--note);
    font: 400 26px/36px "Open Sans", "Noto Sans CJK SC", sans-serif;
    white-space: nowrap;
}

.note-shy-text {
    top: -2px;
    left: 791px;
}

.note-eyes-text {
    top: 243px;
    left: 102px;
}

.note-gap-text {
    top: 275px;
    right: 192px;
}
```
FILE: timeline.js
```js
// Composition length and current time, in frames at 60 fps
const TOTAL = 318;
const CURRENT = 213;

const layers = [
    { name: '[白色 纯色 1]', solid: true, visible: false, start: 0, end: TOTAL },
    { name: 'fagl', visible: true, start: 107, end: null },
    { name: 'flag', visible: true, start: 0, end: 107 },
    { name: 'flag2', visible: true, fx: true, start: 221, end: null },
    { name: 'flag', visible: true, start: 0, end: TOTAL }
];

const pct = (frames) => (frames / TOTAL * 100).toFixed(3) + '%';
const icon = (id, w, h) => `<svg width="${w}" height="${h}"><use href="#i-${id}"/></svg>`;
const cell = (content = '') => `<span class="cell">${content}</span>`;
const drop = (label, value) =>
    `<span class="drop"><select aria-label="${label}"><option>${value}</option></select>${icon('chev', 10, 6)}</span>`;

document.getElementById('layer-rows').innerHTML = layers.map((layer, i) => `
    <tr>
        <td>${cell(layer.visible ? icon('eye', 14, 10) : '')}</td>
        <td></td>
        <td>${layer.visible ? cell() : ''}</td>
        <td>${cell()}</td>
        <td>${icon('chevr', 6, 10)}</td>
        <td><span class="label"></span></td>
        <td class="num">${i + 1}</td>
        <td><span class="layer-name">${layer.solid ? '<i class="solid"></i>' : '<i>T</i>'}${layer.name}</span></td>
        <td>${cell(icon('shyoff', 15, 7))}</td>
        <td>${cell(layer.solid ? '' : icon('sun', 13, 13))}</td>
        <td>${cell(icon('slash', 15, 15))}</td>
        <td class="fx">${layer.fx ? cell('fx') : ''}</td>
        <td></td>
        <td>${cell(icon('blur', 17, 17))}</td>
        <td>${cell()}</td>
        <td>${cell()}</td>
        <td class="mode">${drop('模式', '正常')}</td>
        <td>${cell()}</td>
        <td class="matte"><div class="pick">${icon('whipm', 15, 15)}${drop('轨道遮罩', '无蒙')}</div></td>
        <td class="parent"><div class="pick">${icon('whip', 16, 15)}${drop('父级和链接', '无')}</div></td>
    </tr>`).join('');

document.getElementById('tracks').innerHTML = layers.map((layer) => {
    const width = layer.end === null ? '' : `width:${pct(layer.end - layer.start)};`;
    return `<div class="track"><div class="bar-clip${layer.end === null ? ' open' : ''}" style="${width}margin-left:${pct(layer.start)}"></div></div>`;
}).join('');

// One ruler cell for every 15 frames
let ticks = '';
for (let f = 0; f < TOTAL; f += 15) {
    const sec = Math.floor(f / 60);
    const major = f % 60 === 0;
    const text = f === 0 ? ':00f' : major ? `0${sec}:00f` : `${f % 60}f`;
    const span = Math.min(15, TOTAL - f);
    ticks += `<div class="tick${major ? ' major' : ''}" style="width:${pct(span)}"><span>${text}</span></div>`;
}
document.getElementById('ruler').innerHTML = ticks;

document.getElementById('playhead').style.left = pct(CURRENT);
```
